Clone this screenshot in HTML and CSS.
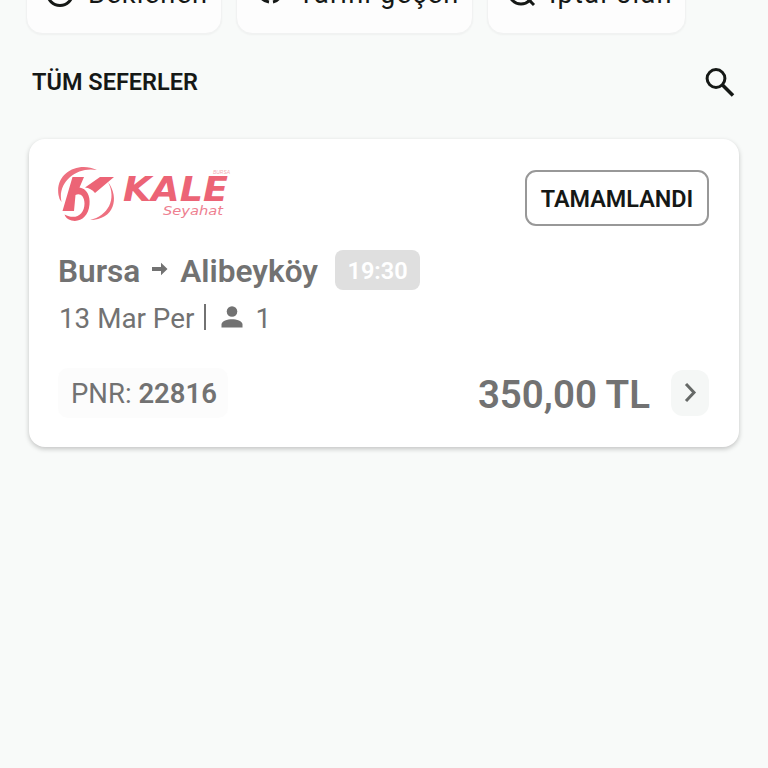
FILE: index.html
```html
<!DOCTYPE html>
<html lang="tr">
<head>
    <meta charset="UTF-8">
    <meta name="viewport" content="width=device-width, initial-scale=1.0">
    <title>Seferlerim</title>
    <link rel="stylesheet" href="styles.css">
</head>
<body>
    <div class="filters">
        <div class="filter beklenen">
            <svg class="filter-icon" width="30" height="30" viewBox="0 0 30 30"><circle cx="14" cy="14" r="12.500" fill="none" stroke="#151816" stroke-width="3"/></svg>
            <span>Beklenen</span>
        </div>
        <div class="filter gecen">
            <svg class="filter-icon" width="30" height="30" viewBox="0 0 30 30"><path d="M4 17q3 5 9 6M24 17q-2 5-7 6" fill="none" stroke="#151816" stroke-width="3.200"/></svg>
            <span>Tarihi geçen</span>
        </div>
        <div class="filter iptal">
            <svg class="filter-icon" width="30" height="30" viewBox="0 0 30 30"><circle cx="14" cy="13" r="12" fill="none" stroke="#151816" stroke-width="3"/><path d="M20 19l7 7" stroke="#151816" stroke-width="3"/></svg>
            <span>İptal olan</span>
        </div>
    </div>
    <div class="header">
        <h1>TÜM SEFERLER</h1>
        <svg width="30" height="30" viewBox="0 0 30 30"><circle cx="11" cy="11.500" r="8.900" fill="none" stroke="#151816" stroke-width="3"/><path d="M17.500 18l10.500 10.500" stroke="#151816" stroke-width="3.600"/></svg>
    </div>
    <div class="card">
        <div class="card-top">
            <svg class="logo" width="180" height="60" viewBox="0 0 180 60">
                <path d="M39 4C20-5-3 7 .5 29q.5 4 3 7C-1 16 19 0 39 4z" fill="#ee7080"/>
                <path d="M50 16c9 17 0 34-18 38 24 0 30-22 18-38z" fill="#ee7080"/>
                <path d="M14.500 11H26l-4.500 10.500c7 1 11 8 10 17-1 12-9 18-18 16-4-1-6-3-7-6 11 6 20 0 20-11 0-8-5-11-9-8.500L16 45H4.500z" fill="#ec6476"/>
                <path d="M42 11h14L37 27q-4-5-10-5.500z" fill="#ec6476"/>
                <text class="logo-name" x="65" y="35" textLength="105" lengthAdjust="spacingAndGlyphs">KALE</text>
                <text class="logo-sub" x="105" y="48.500" textLength="60" lengthAdjust="spacingAndGlyphs">Seyahat</text>
                <text class="logo-small" x="155" y="8" textLength="17" lengthAdjust="spacingAndGlyphs">BURSA</text>
            </svg>
            <div class="status">TAMAMLANDI</div>
        </div>
        <div class="route">
            <span class="from">Bursa</span>
            <svg class="arrow" width="16" height="14" viewBox="0 0 16 14"><path d="M0 5h9V.8L15.500 7 9 13.200V9H0z" fill="#727272"/></svg>
            <span class="to">Alibeyköy</span>
            <span class="time">19:30</span>
        </div>
        <div class="info">
            <span class="date">13 Mar Per</span>
            <span class="line"></span>
            <svg class="person" width="22" height="22" viewBox="0 0 22 22"><circle cx="11" cy="5.500" r="5.300" fill="#727272"/><path d="M.5 21.500v-3c0-3.500 6-5.300 10.500-5.300s10.500 1.800 10.500 5.300v3z" fill="#727272"/></svg>
            <span class="count">1</span>
        </div>
        <div class="card-bottom">
            <div class="pnr">PNR: <b>22816</b></div>
            <div class="price">350,00 TL</div>
            <div class="next">
                <svg width="14" height="20" viewBox="0 0 14 20"><path d="M3 1l8 8.500-8 8.500" fill="none" stroke="#666967" stroke-width="3"/></svg>
            </div>
        </div>
    </div>
</body>
</html>
```
FILE: styles.css
```css
*{
    margin: 0;
    padding: 0;
    box-sizing: border-box;
}
body{
    background-color: #f8faf9;
    font-family: Roboto, sans-serif;
    color: #151816;
    height: 768px;
    overflow: hidden;
}
svg{
    display: block;
    flex-shrink: 0;
}
.filters{
    display: flex;
    align-items: flex-end;
    gap: 14px;
    height: 38px;
    padding: 0 0 4px 26px;
    overflow: hidden;
}
.filter{
    display: flex;
    align-items: center;
    flex-shrink: 0;
    height: 78px;
    padding-left: 19px;
    background-color: #fdfdfd;
    border: 1px solid #f1f2f2;
    border-radius: 16px;
    box-shadow: 0 1px 2px rgba(0, 0, 0, 0.04);
    font-size: 27.2px;
    letter-spacing: 1.2px;
    line-height: 30px;
    white-space: nowrap;
}
.filter span{
    margin-bottom: 2px;
}
.filter-icon{
    margin: 0 12px 2px 0;
}
.beklenen{
    width: 196px;
}
.gecen{
    width: 237px;
}
.iptal{
    width: 199px;
}
.header{
    display: flex;
    justify-content: space-between;
    align-items: center;
    height: 88px;
    padding: 0 33px 0 32px;
}
.header h1{
    font-size: 23.5px;
    font-weight: 600;
}
.card{
    width: 710px;
    height: 308px;
    margin: 13px 0 0 29px;
    padding: 27px 30px 30px 29px;
    background-color: #fff;
    border-radius: 16px;
    box-shadow: 0 2px 5px rgba(0, 0, 0, 0.22);
    color: #727272;
}
.card-top{
    display: flex;
    justify-content: space-between;
    height: 60px;
}
.logo-name{
    font-family: "DejaVu Sans", sans-serif;
    font-size: 34px;
    font-weight: 700;
    font-style: italic;
    fill: #ec6476;
}
.logo-sub{
    font-family: "DejaVu Sans", sans-serif;
    font-size: 12px;
    font-style: italic;
    fill: #ee8090;
}
.logo-small{
    font-family: "Liberation Sans", sans-serif;
    font-size: 5px;
    font-style: italic;
    fill: #f4aab4;
}
.status{
    width: 184px;
    height: 56px;
    margin-top: 4px;
    border: 2px solid #989898;
    border-radius: 11px;
    color: #151816;
    font-size: 23.4px;
    font-weight: 600;
    line-height: 55px;
    text-align: center;
}
.route{
    display: flex;
    align-items: center;
    height: 40px;
    margin-top: 24px;
    font-size: 31.6px;
    font-weight: 600;
}
.from,
.to{
    padding-top: 2px;
}
.arrow{
    margin: 0 12px 3px 12px;
}
.time{
    width: 85px;
    height: 40px;
    margin-left: 17px;
    background-color: #dfdfdf;
    border-radius: 8px;
    color: #fff;
    font-size: 23.5px;
    line-height: 43px;
    text-align: center;
}
.info{
    display: flex;
    align-items: center;
    height: 36px;
    margin-top: 10px;
    font-size: 27.8px;
}
.date{
    padding-left: 1px;
}
.line{
    width: 2px;
    height: 26px;
    margin: 0 15px 2px 10px;
    background-color: #727272;
}
.person{
    margin-bottom: 2px;
}
.count{
    margin-left: 12px;
}
.card-bottom{
    display: flex;
    align-items: center;
    height: 50px;
    margin-top: 32px;
}
.pnr{
    width: 170px;
    height: 50px;
    padding-left: 13px;
    background-color: #fcfcfc;
    border-radius: 10px;
    font-size: 27.5px;
    line-height: 52px;
    white-space: nowrap;
}
.pnr b{
    font-weight: 600;
}
.price{
    margin-left: auto;
    padding-top: 3px;
    font-size: 38.5px;
    font-weight: 600;
}
.next{
    display: flex;
    justify-content: center;
    align-items: center;
    width: 38px;
    height: 46px;
    margin-left: 21px;
    background-color: #f5f7f6;
    border-radius: 12px;
}
```
